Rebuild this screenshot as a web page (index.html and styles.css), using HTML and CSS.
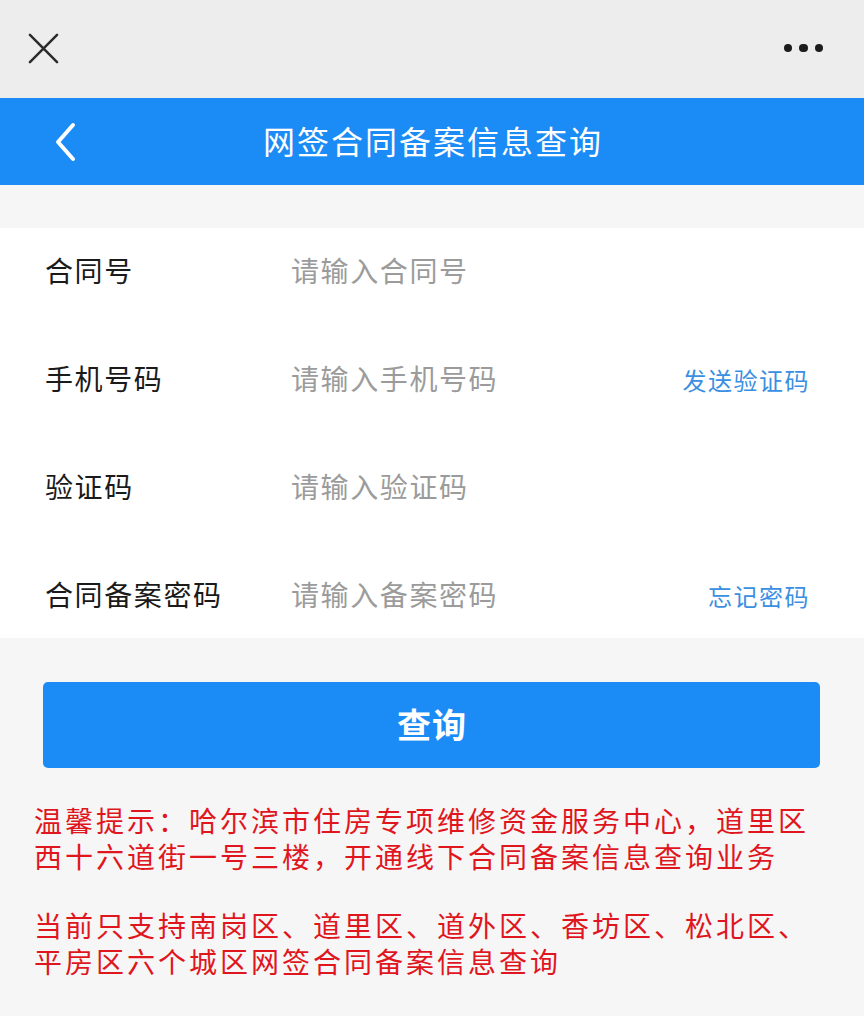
FILE: index.html
```html
<!DOCTYPE html>
<html lang="zh-CN">
<head>
<meta charset="utf-8">
<title>网签合同备案信息查询</title>
<link rel="stylesheet" href="styles.css">
</head>
<body>
  <div class="topbar">
    <svg class="close-icon" width="32" height="32" viewBox="0 0 32 32" aria-label="关闭">
      <path d="M2 2 L30 30 M30 2 L2 30" stroke="#2b2b2b" stroke-width="2.6" stroke-linecap="round" fill="none"/>
    </svg>
    <div class="more">
      <span class="dot"></span><span class="dot"></span><span class="dot"></span>
    </div>
  </div>

  <header class="navbar">
    <svg class="back-icon" width="24" height="40" viewBox="0 0 24 40" aria-label="返回">
      <path d="M20 3 L5 20 L20 37" stroke="#ffffff" stroke-width="4" stroke-linecap="round" stroke-linejoin="round" fill="none"/>
    </svg>
    <h1 class="nav-title">网签合同备案信息查询</h1>
  </header>

  <main class="page">
    <form class="form">
      <div class="row">
        <label class="label">合同号</label>
        <input class="field" type="text" placeholder="请输入合同号">
      </div>
      <div class="row">
        <label class="label">手机号码</label>
        <input class="field" type="tel" placeholder="请输入手机号码">
        <a class="link">发送验证码</a>
      </div>
      <div class="row">
        <label class="label">验证码</label>
        <input class="field" type="text" placeholder="请输入验证码">
      </div>
      <div class="row">
        <label class="label">合同备案密码</label>
        <input class="field" type="password" placeholder="请输入备案密码">
        <a class="link">忘记密码</a>
      </div>
    </form>

    <button class="submit" type="button">查询</button>

    <div class="notice">
      <p>温馨提示：哈尔滨市住房专项维修资金服务中心，道里区西十六道街一号三楼，开通线下合同备案信息查询业务</p>
      <p>当前只支持南岗区、道里区、道外区、香坊区、松北区、平房区六个城区网签合同备案信息查询</p>
    </div>
  </main>
</body>
</html>
```

FILE: styles.css
```css
* {
  box-sizing: border-box;
}

html, body {
  margin: 0;
  padding: 0;
}

body {
  width: 864px;
  min-height: 1016px;
  background: #f6f6f6;
  font-family: "Noto Sans CJK SC", "Noto Sans", sans-serif;
  color: #1a1a1a;
}

/* browser chrome bar */
.topbar {
  height: 98px;
  background: #ededed;
  display: flex;
  align-items: center;
  justify-content: space-between;
  padding: 0 41px 2px 28px;
}

.close-icon {
  display: block;
  width: 31px;
  height: 31px;
}

.more {
  display: flex;
  gap: 7px;
}

.dot {
  width: 8.5px;
  height: 8.5px;
  border-radius: 50%;
  background: #1c1c1c;
}

/* blue title bar */
.navbar {
  height: 87px;
  background: #1b8cf6;
  display: flex;
  align-items: center;
  justify-content: center;
  position: relative;
}

.back-icon {
  position: absolute;
  left: 53px;
  top: 24px;
}

.nav-title {
  margin: 0;
  color: #ffffff;
  font-size: 32px;
  font-weight: 400;
  letter-spacing: 2px;
  line-height: 40px;
  padding-left: 2px;
  position: relative;
  top: -2px;
}

.page {
  padding-top: 43px;
}

/* input rows */
.form {
  background: #ffffff;
  display: flex;
  flex-direction: column;
  gap: 78px;
  padding: 27px 56px 29px 45px;
  margin: 0;
}

.row {
  display: flex;
  align-items: center;
  height: 30px;
}

.label {
  width: 246px;
  flex: none;
  font-size: 28px;
  letter-spacing: 1.6px;
  line-height: 30px;
  color: #1a1a1a;
}

.field {
  flex: 1;
  min-width: 0;
  border: none;
  outline: none;
  background: transparent;
  padding: 0;
  font-family: inherit;
  font-size: 28px;
  letter-spacing: 1.6px;
  line-height: 30px;
  height: 30px;
  color: #333333;
}

.field::placeholder {
  color: #9b9b9b;
}

.link {
  flex: none;
  font-size: 24px;
  letter-spacing: 1.5px;
  margin-right: -2px;
  color: #3a8fe2;
  line-height: 30px;
  position: relative;
  top: 2px;
}

/* query button */
.submit {
  display: block;
  width: 777px;
  height: 86px;
  margin: 44px 0 0 43px;
  border: none;
  border-radius: 5px;
  background: #1b8cf6;
  color: #ffffff;
  font-family: inherit;
  font-size: 34px;
  font-weight: 700;
  letter-spacing: 1px;
  padding: 0 0 4px 1px;
}

/* red notice text */
.notice {
  margin-top: 34px;
  padding-left: 34px;
  width: 832px;
  color: #e0161e;
  font-size: 28px;
  letter-spacing: 3px;
  line-height: 36px;
}

.notice p {
  margin: 0 0 33px 0;
}
```
